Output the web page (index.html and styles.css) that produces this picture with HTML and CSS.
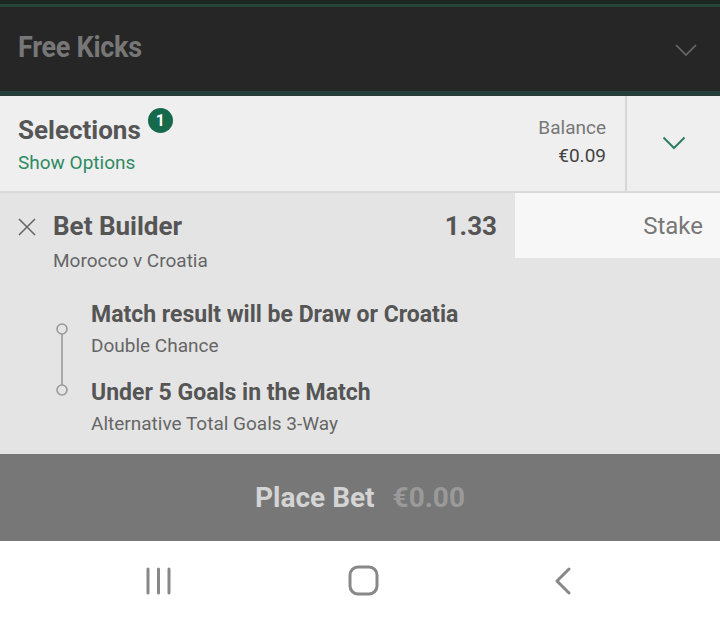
FILE: index.html
```html
<!DOCTYPE html>
<html>
<head>
<meta charset="utf-8">
<link rel="stylesheet" href="styles.css">
</head>
<body>
<div class="screen">
  <div class="top-strip"></div>
  <div class="freekicks">
    <span class="fk-title">Free Kicks</span>
    <svg class="fk-chev" width="22" height="12" viewBox="0 0 22 12"><path d="M1 1 L11 11 L21 1" fill="none" stroke="#6a6a6a" stroke-width="1.6"/></svg>
  </div>
  <div class="fk-line"></div>
  <div class="selections">
    <div class="sel-left">
      <div class="sel-title-row">
        <span class="sel-title">Selections</span>
        <span class="badge">1</span>
      </div>
      <div class="show-options">Show Options</div>
    </div>
    <div class="balance">
      <div class="bal-label">Balance</div>
      <div class="bal-value">€0.09</div>
    </div>
    <div class="sel-toggle">
      <svg width="24" height="14" viewBox="0 0 24 14"><path d="M1.5 1.5 L12 12 L22.5 1.5" fill="none" stroke="#2f7d60" stroke-width="2"/></svg>
    </div>
  </div>
  <div class="bet">
    <div class="bet-head">
      <div class="bet-main">
        <div class="bet-title-row">
          <svg class="close" width="18" height="18" viewBox="0 0 18 18"><path d="M1 1 L17 17 M17 1 L1 17" stroke="#666" stroke-width="1.6"/></svg>
          <span class="bet-title">Bet Builder</span>
          <span class="odds">1.33</span>
        </div>
        <div class="match">Morocco v Croatia</div>
      </div>
      <div class="stake">Stake</div>
    </div>
    <div class="legs">
      <svg class="timeline" width="14" height="78" viewBox="0 0 14 78"><circle cx="7" cy="8" r="5" fill="none" stroke="#999" stroke-width="1.6"/><line x1="7" y1="13" x2="7" y2="64" stroke="#999" stroke-width="1.6"/><circle cx="7" cy="69" r="5" fill="none" stroke="#999" stroke-width="1.6"/></svg>
      <div class="leg-list">
        <div class="leg">
          <div class="leg-title">Match result will be Draw or Croatia</div>
          <div class="leg-sub">Double Chance</div>
        </div>
        <div class="leg">
          <div class="leg-title">Under 5 Goals in the Match</div>
          <div class="leg-sub">Alternative Total Goals 3-Way</div>
        </div>
      </div>
    </div>
  </div>
  <div class="place-bet">
    <span class="pb-label">Place Bet</span>
    <span class="pb-amount">€0.00</span>
  </div>
  <div class="navbar">
    <svg width="28" height="28" viewBox="0 0 28 28"><path d="M3 2 V26 M13.5 2 V26 M24 2 V26" stroke="#888" stroke-width="3" stroke-linecap="round"/></svg>
    <svg width="32" height="32" viewBox="0 0 32 32"><rect x="2" y="2" width="27" height="27" rx="8" fill="none" stroke="#888" stroke-width="3"/></svg>
    <svg width="20" height="28" viewBox="0 0 20 28"><path d="M15 2 L3 14 L15 26" fill="none" stroke="#888" stroke-width="3" stroke-linecap="round" stroke-linejoin="round"/></svg>
  </div>
</div>
</body>
</html>
```
FILE: styles.css
```css
* { box-sizing: border-box; margin: 0; padding: 0; }
html, body { width: 720px; height: 624px; overflow: hidden; }
body { font-family: Roboto, "Liberation Sans", sans-serif; background: #fff; }
.screen { width: 720px; height: 624px; display: flex; flex-direction: column; }

.top-strip { height: 7px; background: #1e2622; border-top: 4px solid #1e2622; border-bottom: 3px solid #23453a; }
.freekicks { height: 84px; background: #262626; display: flex; align-items: center; justify-content: space-between; padding: 0 23px 0 18px; }
.fk-title { font-size: 29px; font-weight: 700; color: #777; letter-spacing: -0.3px; transform: scaleX(0.93); transform-origin: left center; margin-top: -4px; line-height: 34px; }
.fk-chev { margin-top: 2px; }
.fk-line { height: 5px; background: #23403a; border-bottom: 1px solid #2c3b36; }

.selections { height: 97px; background: #efefef; border-bottom: 2px solid #d9d9d9; display: flex; }
.sel-left { flex: 1; padding: 18px 0 0 18px; }
.sel-title-row { display: flex; align-items: flex-start; }
.sel-title { font-size: 26px; font-weight: 700; color: #555; line-height: 32px; }
.badge { width: 25px; height: 25px; border-radius: 50%; background: #17694c; color: #fff; font-size: 16px; font-weight: 700; display: flex; align-items: center; justify-content: center; margin: -6px 0 0 7px; }
.show-options { font-size: 19px; color: #2e8a62; margin-top: 6px; line-height: 22px; }
.balance { padding: 21px 19px 0 0; text-align: right; border-right: 2px solid #d6d6d6; }
.bal-label { font-size: 19px; color: #777; line-height: 22px; }
.bal-value { font-size: 19px; color: #444; line-height: 22px; margin-top: 6px; }
.sel-toggle { width: 93px; display: flex; align-items: center; justify-content: center; padding-bottom: 2px; }

.bet { background: #e4e4e4; height: 261px; }
.bet-head { display: flex; }
.bet-main { flex: 1; padding: 18px 18px 0 18px; }
.bet-title-row { display: flex; align-items: center; }
.close { margin-right: 17px; margin-top: 1px; }
.bet-title { font-size: 26px; font-weight: 700; color: #555; flex: 1; line-height: 30px; }
.odds { font-size: 26px; font-weight: 700; color: #555; line-height: 30px; }
.match { font-size: 19px; color: #666; margin: 9px 0 0 35px; line-height: 22px; }
.stake { width: 205px; height: 65px; background: #f7f7f7; font-size: 24px; color: #777; display: flex; align-items: center; justify-content: flex-end; padding: 0 17px 0 0; }
.legs { display: flex; align-items: flex-start; padding: 0 0 0 55px; }
.timeline { margin-top: 49px; }
.leg-list { margin-left: 22px; margin-top: 29px; display: flex; flex-direction: column; gap: 22px; }
.leg-title { font-size: 23px; font-weight: 700; color: #555; line-height: 28px; }
.leg-sub { font-size: 19px; color: #666; margin-top: 6px; line-height: 22px; }

.place-bet { height: 87px; background: #777; display: flex; align-items: center; justify-content: center; gap: 18px; }
.pb-label { font-size: 28px; font-weight: 700; color: #d4d4d4; }
.pb-amount { font-size: 28px; font-weight: 700; color: #9a9a9a; }

.navbar { flex: 1; background: #fff; display: flex; align-items: center; justify-content: space-between; padding: 0 146px 4px 145px; }
```
